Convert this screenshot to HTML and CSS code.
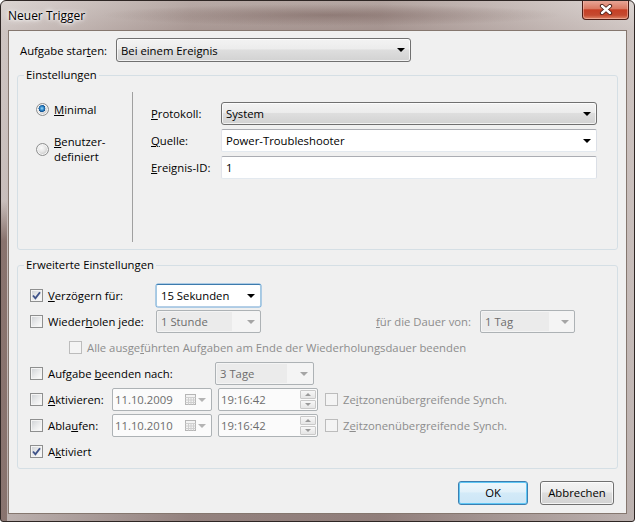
FILE: index.html
```html
<!DOCTYPE html>
<html>
<head lang="de">
    <meta charset="UTF-8">
    <title>Neuer Trigger</title>
    <link rel="stylesheet" href="styles.css">
</head>
<body>
<div class="window">
    <div class="titlebar">
        <span class="title">Neuer Trigger</span>
        <a class="close-btn" href="javascript:void(0);">
            <svg width="14" height="11" viewBox="0 0 14 11">
                <path d="M3 2 L11 9 M11 2 L3 9" stroke="#4a1e16" stroke-width="4.2" stroke-linecap="round"/>
                <path d="M3 2 L11 9 M11 2 L3 9" stroke="#ffffff" stroke-width="2.4" stroke-linecap="round"/>
            </svg>
        </a>
    </div>
    <div class="client">
        <div class="start-row">
            <label class="start-label">Aufgabe star<u>t</u>en:</label>
            <div class="combo combo-button combo-start"><span class="combo-text">Bei einem Ereignis</span><i class="arrow"></i></div>
        </div>

        <fieldset class="group group-settings">
            <legend>Einstellungen</legend>
            <div class="settings-body">
                <div class="radio-col">
                    <div class="radio-item radio-first"><span class="radio radio-on"></span><span><u>M</u>inimal</span></div>
                    <div class="radio-item radio-second"><span class="radio"></span><span><u>B</u>enutzer-<br>definiert</span></div>
                </div>
                <div class="field-col">
                    <div class="field-row">
                        <label class="field-label"><u>P</u>rotokoll:</label>
                        <div class="combo combo-button combo-wide"><span class="combo-text">System</span><i class="arrow"></i></div>
                    </div>
                    <div class="field-row">
                        <label class="field-label"><u>Q</u>uelle:</label>
                        <div class="combo combo-edit combo-wide"><span class="combo-text">Power-Troubleshooter</span><i class="arrow"></i></div>
                    </div>
                    <div class="field-row">
                        <label class="field-label"><u>E</u>reignis-ID:</label>
                        <div class="combo combo-edit combo-wide"><span class="combo-text">1</span></div>
                    </div>
                </div>
            </div>
        </fieldset>

        <fieldset class="group group-advanced">
            <legend>Erweiterte Einstellungen</legend>
            <div class="adv-body">
                <div class="adv-row">
                    <label class="check-label check-label-mid"><span class="check check-on"><svg width="11" height="11" viewBox="0 0 11 11"><path d="M2 5.5 L4.4 8.3 L9 2.2" fill="none" stroke="#3f5389" stroke-width="1.9"/></svg></span><span><u>V</u>erzögern für:</span></label>
                    <div class="combo combo-edit combo-focus combo-small"><span class="combo-text">15 Sekunden</span><i class="arrow"></i></div>
                </div>
                <div class="adv-row">
                    <label class="check-label check-label-mid"><span class="check"></span><span>Wieder<u>h</u>olen jede:</span></label>
                    <div class="combo combo-disabled combo-small"><span class="combo-text">1 Stunde</span><i class="arrow"></i></div>
                    <label class="duration-label"><u>f</u>ür die Dauer von:</label>
                    <div class="combo combo-disabled combo-day"><span class="combo-text">1 Tag</span><i class="arrow"></i></div>
                </div>
                <div class="adv-row">
                    <label class="check-label check-label-sub is-disabled"><span class="check check-disabled"></span><span>Alle ausge<u>f</u>ührten Aufgaben am Ende der Wiederholungsdauer beenden</span></label>
                </div>
                <div class="adv-row">
                    <label class="check-label check-label-long"><span class="check"></span><span>Aufgabe <u>b</u>eenden nach:</span></label>
                    <div class="combo combo-disabled combo-end"><span class="combo-text">3 Tage</span><i class="arrow"></i></div>
                </div>
                <div class="adv-row">
                    <label class="check-label check-label-short"><span class="check"></span><span><u>A</u>ktivieren:</span></label>
                    <div class="picker"><span class="picker-text">11.10.2009</span><svg class="cal-icon" width="11" height="11" viewBox="0 0 11 11"><rect x="0.5" y="0.5" width="10" height="10" fill="#f3f3f3" stroke="#b5b5b5"/><path d="M0.5 3.5 H10.5 M0.5 6 H10.5 M0.5 8.5 H10.5 M3.5 3.5 V10.5 M6 3.5 V10.5 M8.5 3.5 V10.5" stroke="#cfcfcf"/></svg><i class="arrow arrow-gray"></i></div>
                    <div class="picker picker-time"><span class="picker-text">19:16:42</span><span class="spin"><span class="spin-btn"><i class="spin-up"></i></span><span class="spin-btn"><i class="spin-down"></i></span></span></div>
                    <label class="check-label sync-label is-disabled"><span class="check check-disabled"></span><span>Ze<u>i</u>tzonenübergreifende Synch.</span></label>
                </div>
                <div class="adv-row">
                    <label class="check-label check-label-short"><span class="check"></span><span>Abla<u>u</u>fen:</span></label>
                    <div class="picker"><span class="picker-text">11.10.2010</span><svg class="cal-icon" width="11" height="11" viewBox="0 0 11 11"><rect x="0.5" y="0.5" width="10" height="10" fill="#f3f3f3" stroke="#b5b5b5"/><path d="M0.5 3.5 H10.5 M0.5 6 H10.5 M0.5 8.5 H10.5 M3.5 3.5 V10.5 M6 3.5 V10.5 M8.5 3.5 V10.5" stroke="#cfcfcf"/></svg><i class="arrow arrow-gray"></i></div>
                    <div class="picker picker-time"><span class="picker-text">19:16:42</span><span class="spin"><span class="spin-btn"><i class="spin-up"></i></span><span class="spin-btn"><i class="spin-down"></i></span></span></div>
                    <label class="check-label sync-label is-disabled"><span class="check check-disabled"></span><span>Z<u>e</u>itzonenübergreifende Synch.</span></label>
                </div>
                <div class="adv-row">
                    <label class="check-label"><span class="check check-on"><svg width="11" height="11" viewBox="0 0 11 11"><path d="M2 5.5 L4.4 8.3 L9 2.2" fill="none" stroke="#3f5389" stroke-width="1.9"/></svg></span><span>A<u>k</u>tiviert</span></label>
                </div>
            </div>
        </fieldset>

        <div class="button-row">
            <a class="btn btn-default" href="javascript:void(0);">OK</a>
            <a class="btn btn-cancel" href="javascript:void(0);">Abbrechen</a>
        </div>
    </div>
</div>
</body>
</html>
```

FILE: styles.css
```css
* {
    box-sizing: border-box;
}
body {
    margin: 0px;
    font-family: "Open Sans", "Noto Sans", sans-serif;
    font-size: 11.3px;
    color: #000000;
    background: #ffffff;
}
a {
    text-decoration: none;
    color: #000000;
}
u {
    text-underline-offset: 1px;
}

/* fenster mit glasrahmen */
.window {
    width: 635px;
    height: 522px;
    border: 1px solid #2e2624;
    border-radius: 6px 6px 3px 3px;
    background:
        radial-gradient(ellipse 230px 11px at 330px 14px, rgba(80, 50, 45, 0.32), rgba(80, 50, 45, 0) 100%),
        linear-gradient(180deg, rgba(0, 0, 0, 0) 200px, rgba(95, 65, 58, 0.6) 240px, rgba(95, 65, 58, 0.55) 100%) 0px 0px / 6px 100% no-repeat,
        linear-gradient(90deg, rgba(255, 255, 255, 0.3) 0%, rgba(90, 60, 55, 0.18) 30%, rgba(90, 60, 55, 0.22) 60%, rgba(255, 255, 255, 0.3) 100%),
        linear-gradient(180deg, #cdc3bf 0px, #b9aba7 30px, #ad9e9a 60%, #9f908d 100%);
    display: flex;
    flex-direction: column;
    overflow: hidden;
}
.titlebar {
    height: 29px;
    display: flex;
    align-items: flex-start;
    padding-left: 7px;
}
.title {
    line-height: 29px;
    font-size: 12px;
    text-shadow: 0 0 5px #ffffff, 0 0 3px #ffffff, 0 0 8px rgba(255, 255, 255, 0.8);
}
.close-btn {
    margin-left: auto;
    margin-right: 5px;
    margin-top: -1px;
    width: 47px;
    height: 20px;
    border: 1px solid #4d1d15;
    border-top: none;
    border-radius: 0px 0px 4px 4px;
    background: linear-gradient(180deg, #e9ab9c 0%, #da7a63 45%, #c63f25 52%, #c54a30 80%, #e08768 100%);
    box-shadow: inset 0 0 0 1px rgba(255, 210, 200, 0.45);
    display: flex;
    align-items: center;
    justify-content: center;
}
.client {
    margin: 0px 7px;
    height: 484px;
    background: #f0f0f0;
    border: 1px solid #85776f;
    display: flex;
    flex-direction: column;
}

/* kopfzeile */
.start-row {
    display: flex;
    align-items: center;
    padding: 7px 0px 0px 11px;
}
.start-label {
    width: 96px;
}

/* auswahlfelder */
.combo {
    display: flex;
    align-items: center;
    height: 23px;
    padding-left: 4px;
    border-radius: 2px;
    white-space: nowrap;
}
.combo-text {
    flex: 1;
}
.combo-button {
    border: 1px solid #707070;
    border-radius: 3px;
    background: linear-gradient(180deg, #f3f3f3 0%, #ececec 45%, #dedede 50%, #d2d2d2 100%);
    box-shadow: inset 0 0 0 1px rgba(255, 255, 255, 0.7);
}
.combo-edit {
    background: #ffffff;
    border: 1px solid;
    border-color: #abadb3 #dbdfe6 #e3e9ef #e2e3ea;
}
.combo-focus {
    border-color: #3d7bad #a4c9e3 #b5cfe7 #a4c9e3;
    box-shadow: 0 0 0 0.5px #6aa6d8;
}
.combo-disabled {
    border: 1px solid #adb2b5;
    background: #f4f4f4;
    color: #6d6d6d;
    padding-left: 1px;
}
.combo-disabled .combo-text {
    flex: none;
    width: 73%;
    height: 19px;
    line-height: 19px;
    padding-left: 3px;
    background: #ebebeb;
}
.combo-disabled .arrow {
    margin-left: auto;
    border-top-color: #a5a5a5;
}
.combo-start {
    width: 295px;
    height: 24px;
}
.combo-wide {
    width: 376px;
}
.combo-small {
    width: 105px;
}
.combo-day {
    width: 95px;
}
.combo-end {
    width: 99px;
}
.arrow {
    width: 0px;
    height: 0px;
    border-left: 4px solid transparent;
    border-right: 4px solid transparent;
    border-top: 4px solid #000000;
    margin-right: 5px;
}
.arrow-gray {
    border-top-color: #b4b4b4;
    margin-left: 2px;
}

/* gruppen */
.group {
    margin: 5px 8px 0px 8px;
    padding: 0px;
    min-width: 0px;
    border: 1px solid #d5dfe5;
    border-radius: 3px;
}
.group legend {
    margin-left: 6px;
    padding: 0px 2px;
    line-height: 16px;
}
.group-advanced {
    margin-top: 7px;
}
.settings-body {
    display: flex;
    padding: 9px 0px 7px 0px;
}
.radio-col {
    width: 114px;
    padding-left: 18px;
    line-height: 15px;
}
.radio-item {
    display: flex;
    align-items: center;
}
.radio-first {
    margin-top: 10px;
}
.radio-second {
    margin-top: 17px;
}
.radio {
    width: 13px;
    height: 13px;
    margin-right: 5px;
    border: 1px solid #8e8f8f;
    border-radius: 50%;
    background: radial-gradient(circle at 40% 35%, #fbfbfb 0px, #e6e6e6 4px, #c9c9c9 7px);
    box-shadow: inset 0 0 0 1px #f6f6f6;
    flex: none;
}
.radio-on {
    background:
        radial-gradient(circle at 45% 40%, #9fdcfa 0px, #2f86c8 2px, #0f4d8c 3.4px, rgba(0, 0, 0, 0) 3.6px),
        radial-gradient(circle at 40% 35%, #fbfbfb 0px, #e6e6e6 4px, #c9c9c9 7px);
}
.field-col {
    height: 150px;
    border-left: 1px solid #a0a0a0;
    padding: 10px 0px 0px 18px;
    display: flex;
    flex-direction: column;
    gap: 4px;
}
.field-row {
    display: flex;
    align-items: center;
}
.field-label {
    width: 70px;
}

/* erweiterte einstellungen */
.adv-body {
    padding: 11px 0px 5px 12px;
    display: flex;
    flex-direction: column;
    gap: 3px;
}
.adv-row {
    display: flex;
    align-items: center;
    height: 23px;
    white-space: nowrap;
}
.check-label {
    display: flex;
    align-items: center;
    gap: 5px;
}
.check-label-short {
    width: 82px;
}
.check-label-mid {
    width: 126px;
}
.check-label-long {
    width: 185px;
}
.check-label-sub {
    margin-left: 39px;
}
.is-disabled {
    color: #8d8d8d;
}
.check {
    width: 13px;
    height: 13px;
    border: 1px solid #8e8f8f;
    background: linear-gradient(135deg, #cdd0d4 0%, #e9eaeb 50%, #fafafa 90%);
    box-shadow: inset 0 0 0 1px #f4f4f4;
    display: flex;
    align-items: center;
    justify-content: center;
    flex: none;
}
.check-disabled {
    border-color: #bcbcbc;
    background: #f4f4f4;
    box-shadow: none;
}
.duration-label {
    width: 219px;
    text-align: right;
    padding-right: 9px;
    color: #8d8d8d;
}
.picker {
    display: flex;
    align-items: center;
    width: 100px;
    height: 23px;
    padding-left: 2px;
    border: 1px solid #adb2b5;
    border-radius: 2px;
    background: #fbfbfb;
    color: #6d6d6d;
}
.picker + .picker {
    margin-left: 6px;
}
.picker-text {
    flex: 1;
}
.picker-time {
    padding-right: 1px;
}
.spin {
    display: flex;
    flex-direction: column;
    gap: 1px;
}
.spin-btn {
    width: 16px;
    height: 9px;
    border: 1px solid #c9c9c9;
    border-radius: 1px;
    background: linear-gradient(180deg, #f7f7f7, #e6e6e6);
    display: flex;
    align-items: center;
    justify-content: center;
}
.spin-up {
    border-left: 3px solid transparent;
    border-right: 3px solid transparent;
    border-bottom: 3px solid #9a9a9a;
}
.spin-down {
    border-left: 3px solid transparent;
    border-right: 3px solid transparent;
    border-top: 3px solid #9a9a9a;
}
.sync-label {
    margin-left: 7px;
}

/* schaltflaechen */
.button-row {
    display: flex;
    justify-content: flex-end;
    gap: 12px;
    margin-top: 12px;
    padding-right: 12px;
}
.btn {
    height: 24px;
    line-height: 22px;
    text-align: center;
    border: 1px solid #707070;
    border-radius: 3px;
    background: linear-gradient(180deg, #f3f3f3 0%, #ececec 45%, #dedede 50%, #d2d2d2 100%);
    box-shadow: inset 0 0 0 1px rgba(255, 255, 255, 0.75);
}
.btn-default {
    width: 70px;
    border-color: #3c7fb1;
    background: linear-gradient(180deg, #eef7fc 0%, #e2f1fa 45%, #d3eaf8 50%, #cde6f6 100%);
    box-shadow: inset 0 0 0 1px #5fc7f5;
}
.btn-cancel {
    width: 74px;
}
```
